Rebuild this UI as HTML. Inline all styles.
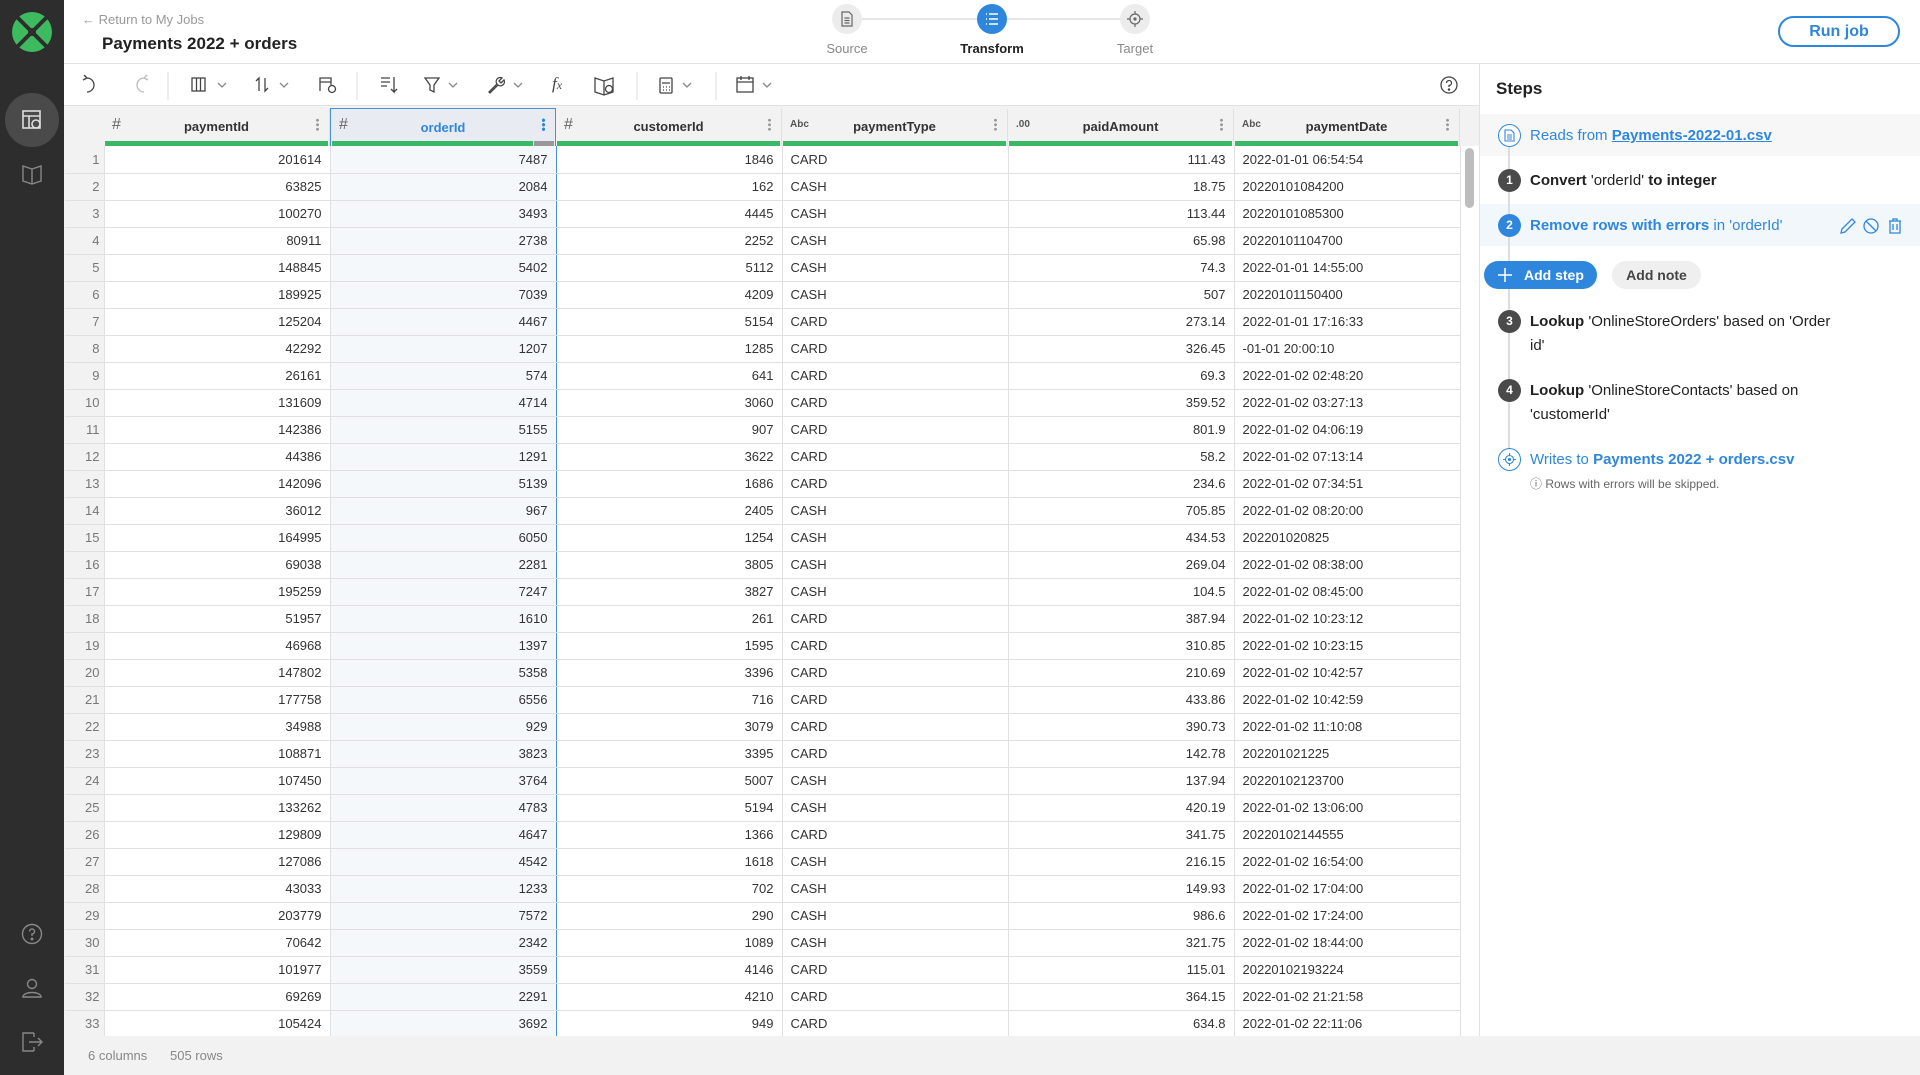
<!DOCTYPE html>
<html><head><meta charset="utf-8"><style>
*{box-sizing:border-box;margin:0;padding:0}
body{width:1920px;height:1075px;overflow:hidden;font-family:"Liberation Sans",sans-serif;background:#fff;position:relative;color:#333}
.abs{position:absolute}
#side{left:0;top:0;width:64px;height:1075px;background:#2d2d2d}
#hdr{left:64px;top:0;width:1856px;height:64px;border-bottom:1px solid #e2e2e2;background:#fff}
#tb{left:64px;top:64px;width:1415px;height:42px;border-bottom:1px solid #e2e2e2;background:#fff}
#grid{left:64px;top:106px;width:1415px;height:930px;background:#f2f2f2}
#foot{left:64px;top:1036px;width:1856px;height:39px;background:#f2f2f2;font-size:13px;color:#888}
#panel{left:1479px;top:64px;width:441px;height:972px;background:#fff;border-left:1px solid #e2e2e2}
table{border-collapse:collapse;table-layout:fixed;position:absolute;left:1px;top:40px;font-size:13px;color:#333}
td{height:27px;border-bottom:1px solid #e0e0e0;border-right:1px solid #e0e0e0;background:#fff;white-space:nowrap;overflow:hidden;padding:0 8px;text-align:right}
td:nth-child(1){background:#f2f2f2;color:#777;padding:0 4px 0 0;width:39px}
td:nth-child(3){background:#f4f8fb;border-left:1px solid #4a90d9;border-right:1px solid #4a90d9}
td:nth-child(5),td:nth-child(7){text-align:left}
.th{position:absolute;top:3px;height:37px;background:#f2f2f2;border-right:1px solid #e0e0e0;font-size:13px;font-weight:bold;color:#333}
.th .n{position:absolute;left:0;right:0;top:10px;text-align:center}
.th .t{position:absolute;left:8px;top:7px;font-weight:normal;color:#666;font-size:16px}
.th .ts{position:absolute;left:8px;top:10px;font-size:10px;color:#555}
.th .g{position:absolute;left:1px;right:1px;bottom:0;height:5px;background:#3bb866}
.th .d{position:absolute;right:10px;top:9px;width:3px;height:13px;background:radial-gradient(circle,#999 1.3px,transparent 1.6px) 0 0/3px 4.5px}
.ic{position:absolute}
.sb{position:absolute;font-size:15px}
</style></head><body>
<div id="side" class="abs">
<svg class="ic" style="left:11px;top:11px" width="42" height="42" viewBox="0 0 42 42"><circle cx="21" cy="21" r="20" fill="#3dbb5e"/><path d="M3 3L39 39M39 3L3 39" stroke="#2d2d2d" stroke-width="4"/><circle cx="21" cy="21" r="4" fill="#2d2d2d"/></svg>
<div class="abs" style="left:5px;top:93px;width:54px;height:54px;border-radius:27px;background:#4a4a4a"></div>
<svg class="ic" style="left:21px;top:109px" width="22" height="22" viewBox="0 0 22 22" fill="none" stroke="#ddd" stroke-width="1.6"><rect x="2" y="2" width="17" height="17"/><path d="M2 7H19M8 7V19"/><circle cx="15" cy="15" r="4"/></svg>
<svg class="ic" style="left:21px;top:163px" width="22" height="22" viewBox="0 0 22 22" fill="none" stroke="#888" stroke-width="1.4"><path d="M2 3L11 6L20 3V18L11 21L2 18ZM11 6V21"/></svg>
<svg class="ic" style="left:21px;top:923px" width="22" height="22" viewBox="0 0 22 22" fill="none" stroke="#888" stroke-width="1.4"><circle cx="11" cy="11" r="9.5"/><path d="M8.5 8.5A2.5 2.5 0 1 1 11 11V13"/><circle cx="11" cy="16" r=".8" fill="#888"/></svg>
<svg class="ic" style="left:21px;top:977px" width="22" height="22" viewBox="0 0 22 22" fill="none" stroke="#888" stroke-width="1.4"><circle cx="11" cy="7" r="4.5"/><path d="M2 20C2 14 20 14 20 20Z"/></svg>
<svg class="ic" style="left:21px;top:1031px" width="22" height="22" viewBox="0 0 22 22" fill="none" stroke="#888" stroke-width="1.4"><path d="M13 2H2V20H13M13 2V6M13 20V16M8 11H21M17 7L21 11L17 15"/></svg>
</div>

<div id="hdr" class="abs">
<div class="abs" style="left:18px;top:12px;font-size:13px;color:#999">&#8592; Return to My Jobs</div>
<div class="abs" style="left:38px;top:34px;font-size:17px;font-weight:bold;color:#222">Payments 2022 + orders</div>
<div class="abs" style="left:798px;top:18px;width:272px;height:2px;background:#e6e6e6"></div>
<div class="abs" style="left:768px;top:4px;width:30px;height:30px;border-radius:15px;background:#ececec"></div>
<svg class="ic" style="left:775px;top:11px" width="16" height="16" viewBox="0 0 16 16" fill="none" stroke="#666" stroke-width="1.2"><path d="M3 1H10L13 4V15H3ZM5.5 7H10.5M5.5 9.5H10.5M5.5 12H10.5"/></svg>
<div class="abs" style="left:753px;top:41px;width:60px;text-align:center;font-size:13px;color:#888">Source</div>
<div class="abs" style="left:913px;top:4px;width:30px;height:30px;border-radius:15px;background:#2f87dd"></div>
<svg class="ic" style="left:920px;top:11px" width="16" height="16" viewBox="0 0 16 16" fill="none" stroke="#fff" stroke-width="1.4"><path d="M5 3H14M5 8H14M5 13H14M2 3H3M2 8H3M2 13H3"/></svg>
<div class="abs" style="left:888px;top:41px;width:80px;text-align:center;font-size:13px;font-weight:bold;color:#222">Transform</div>
<div class="abs" style="left:1056px;top:4px;width:30px;height:30px;border-radius:15px;background:#ececec"></div>
<svg class="ic" style="left:1063px;top:11px" width="16" height="16" viewBox="0 0 16 16" fill="none" stroke="#666" stroke-width="1.2"><circle cx="8" cy="8" r="5"/><circle cx="8" cy="8" r="1" fill="#666"/><path d="M8 0V3M8 13V16M0 8H3M13 8H16"/></svg>
<div class="abs" style="left:1041px;top:41px;width:60px;text-align:center;font-size:13px;color:#888">Target</div>
<div class="abs" style="left:1714px;top:16px;width:122px;height:31px;border:2px solid #2f87dd;border-radius:16px;color:#2f87dd;font-weight:bold;font-size:16px;text-align:center;line-height:27px">Run job</div>
</div>

<div id="tb" class="abs">
<svg class="ic" style="left:0;top:0" width="1415" height="42" fill="none" stroke="#444" stroke-width="1.3">
<path d="M29 14A7 7 0 1 1 29 28M29 14L26 11M29 14L25 16" transform="translate(-6,0)"/>
<path stroke="#bbb" d="M74 14A7 7 0 1 0 74 28M74 14L77 11M74 14L78 16" transform="translate(6,0)"/>
<path stroke="#e4e4e4" d="M104 8V36M293 8V36M573 8V36M652 8V36"/>
<rect x="128" y="14" width="13" height="13"/><path d="M132.5 14V27M136.5 14V27"/><path stroke="#888" d="M154 19L158 23L162 19"/>
<path d="M195 27V14L192 17M201 14V27L204 24"/><path stroke="#888" d="M216 19L220 23L224 19"/>
<path d="M256 27V14H267V21M256 18H267"/><circle cx="268" cy="25" r="3.5"/>
<path d="M317 14H326M317 18H326M317 22H323M330 13V28L327 25M330 28L333 25"/>
<path d="M361 14H375L370 21V28L366 26V21Z"/><path stroke="#888" d="M385 19L389 23L393 19"/>
<path d="M425 28L433 20A4 4 0 0 1 438 14L435 17L437 19L440 16A4 4 0 0 1 434 21L426 29Z"/><path stroke="#888" d="M450 19L454 23L458 19"/>
<path d="M531 14L540 17L549 14V28L540 31L531 28ZM540 17V31"/><circle cx="545" cy="25" r="3.5"/>
<rect x="596" y="14" width="12" height="15" rx="1"/><path d="M598 19H606M599 23H600M602 23H603M605 23H606M599 26H600M602 26H603M605 26H606"/><path stroke="#888" d="M619 19L623 23L627 19"/>
<rect x="673" y="14" width="16" height="14"/><path d="M673 18H689M677 12V16M685 12V16"/><path stroke="#888" d="M699 19L703 23L707 19"/>
<circle cx="1385" cy="21" r="8"/><path d="M1382.5 19A2.5 2.5 0 1 1 1385 21.5V23"/><circle cx="1385" cy="25.5" r=".6" fill="#444"/>
</svg>
<div class="abs" style="left:488px;top:10px;font-family:'Liberation Serif',serif;font-style:italic;font-size:17px;color:#444">f<span style="font-size:12px">x</span></div>
</div>

<div id="grid" class="abs">
<div class="th" style="left:40px;width:226px"><span class="t">#</span><span class="n">paymentId</span><span class="d"></span><span class="g"></span></div>
<div class="th" style="left:266px;width:226px;background:#e8ecf2;border:1px solid #4a90d9;border-bottom:none;top:2px;height:38px"><span class="t">#</span><span class="n" style="color:#2f87dd;top:11px">orderId</span><span class="d" style="background:radial-gradient(circle,#2f87dd 1.5px,transparent 1.8px) 0 0/3px 4.5px"></span><span class="g" style="right:22px"></span><span class="abs" style="right:1px;bottom:0;width:20px;height:5px;background:#999"></span></div>
<div class="th" style="left:492px;width:226px"><span class="t">#</span><span class="n">customerId</span><span class="d"></span><span class="g"></span></div>
<div class="th" style="left:718px;width:226px"><span class="ts">Abc</span><span class="n">paymentType</span><span class="d"></span><span class="g"></span></div>
<div class="th" style="left:944px;width:226px"><span class="ts">.00</span><span class="n">paidAmount</span><span class="d"></span><span class="g"></span></div>
<div class="th" style="left:1170px;width:226px"><span class="ts">Abc</span><span class="n">paymentDate</span><span class="d"></span><span class="g"></span></div>
<table>
<colgroup><col style="width:39px"><col style="width:226px"><col style="width:226px"><col style="width:226px"><col style="width:226px"><col style="width:226px"><col style="width:226px"></colgroup>
<tr><td>1</td><td>201614</td><td>7487</td><td>1846</td><td>CARD</td><td>111.43</td><td>2022-01-01 06:54:54</td></tr>
<tr><td>2</td><td>63825</td><td>2084</td><td>162</td><td>CASH</td><td>18.75</td><td>20220101084200</td></tr>
<tr><td>3</td><td>100270</td><td>3493</td><td>4445</td><td>CASH</td><td>113.44</td><td>20220101085300</td></tr>
<tr><td>4</td><td>80911</td><td>2738</td><td>2252</td><td>CASH</td><td>65.98</td><td>20220101104700</td></tr>
<tr><td>5</td><td>148845</td><td>5402</td><td>5112</td><td>CASH</td><td>74.3</td><td>2022-01-01 14:55:00</td></tr>
<tr><td>6</td><td>189925</td><td>7039</td><td>4209</td><td>CASH</td><td>507</td><td>20220101150400</td></tr>
<tr><td>7</td><td>125204</td><td>4467</td><td>5154</td><td>CARD</td><td>273.14</td><td>2022-01-01 17:16:33</td></tr>
<tr><td>8</td><td>42292</td><td>1207</td><td>1285</td><td>CARD</td><td>326.45</td><td>-01-01 20:00:10</td></tr>
<tr><td>9</td><td>26161</td><td>574</td><td>641</td><td>CARD</td><td>69.3</td><td>2022-01-02 02:48:20</td></tr>
<tr><td>10</td><td>131609</td><td>4714</td><td>3060</td><td>CARD</td><td>359.52</td><td>2022-01-02 03:27:13</td></tr>
<tr><td>11</td><td>142386</td><td>5155</td><td>907</td><td>CARD</td><td>801.9</td><td>2022-01-02 04:06:19</td></tr>
<tr><td>12</td><td>44386</td><td>1291</td><td>3622</td><td>CARD</td><td>58.2</td><td>2022-01-02 07:13:14</td></tr>
<tr><td>13</td><td>142096</td><td>5139</td><td>1686</td><td>CARD</td><td>234.6</td><td>2022-01-02 07:34:51</td></tr>
<tr><td>14</td><td>36012</td><td>967</td><td>2405</td><td>CASH</td><td>705.85</td><td>2022-01-02 08:20:00</td></tr>
<tr><td>15</td><td>164995</td><td>6050</td><td>1254</td><td>CASH</td><td>434.53</td><td>202201020825</td></tr>
<tr><td>16</td><td>69038</td><td>2281</td><td>3805</td><td>CASH</td><td>269.04</td><td>2022-01-02 08:38:00</td></tr>
<tr><td>17</td><td>195259</td><td>7247</td><td>3827</td><td>CASH</td><td>104.5</td><td>2022-01-02 08:45:00</td></tr>
<tr><td>18</td><td>51957</td><td>1610</td><td>261</td><td>CARD</td><td>387.94</td><td>2022-01-02 10:23:12</td></tr>
<tr><td>19</td><td>46968</td><td>1397</td><td>1595</td><td>CARD</td><td>310.85</td><td>2022-01-02 10:23:15</td></tr>
<tr><td>20</td><td>147802</td><td>5358</td><td>3396</td><td>CARD</td><td>210.69</td><td>2022-01-02 10:42:57</td></tr>
<tr><td>21</td><td>177758</td><td>6556</td><td>716</td><td>CARD</td><td>433.86</td><td>2022-01-02 10:42:59</td></tr>
<tr><td>22</td><td>34988</td><td>929</td><td>3079</td><td>CARD</td><td>390.73</td><td>2022-01-02 11:10:08</td></tr>
<tr><td>23</td><td>108871</td><td>3823</td><td>3395</td><td>CARD</td><td>142.78</td><td>202201021225</td></tr>
<tr><td>24</td><td>107450</td><td>3764</td><td>5007</td><td>CASH</td><td>137.94</td><td>20220102123700</td></tr>
<tr><td>25</td><td>133262</td><td>4783</td><td>5194</td><td>CASH</td><td>420.19</td><td>2022-01-02 13:06:00</td></tr>
<tr><td>26</td><td>129809</td><td>4647</td><td>1366</td><td>CARD</td><td>341.75</td><td>20220102144555</td></tr>
<tr><td>27</td><td>127086</td><td>4542</td><td>1618</td><td>CASH</td><td>216.15</td><td>2022-01-02 16:54:00</td></tr>
<tr><td>28</td><td>43033</td><td>1233</td><td>702</td><td>CASH</td><td>149.93</td><td>2022-01-02 17:04:00</td></tr>
<tr><td>29</td><td>203779</td><td>7572</td><td>290</td><td>CASH</td><td>986.6</td><td>2022-01-02 17:24:00</td></tr>
<tr><td>30</td><td>70642</td><td>2342</td><td>1089</td><td>CASH</td><td>321.75</td><td>2022-01-02 18:44:00</td></tr>
<tr><td>31</td><td>101977</td><td>3559</td><td>4146</td><td>CARD</td><td>115.01</td><td>20220102193224</td></tr>
<tr><td>32</td><td>69269</td><td>2291</td><td>4210</td><td>CARD</td><td>364.15</td><td>2022-01-02 21:21:58</td></tr>
<tr><td>33</td><td>105424</td><td>3692</td><td>949</td><td>CARD</td><td>634.8</td><td>2022-01-02 22:11:06</td></tr>
</table>
<div class="abs" style="left:1396px;top:40px;width:19px;height:890px;background:#fff;border-left:1px solid #e0e0e0"></div>
<div class="abs" style="left:1401px;top:42px;width:9px;height:60px;border-radius:5px;background:#bdbdbd"></div>
</div>

<div id="foot" class="abs"><span class="abs" style="left:24px;top:12px">6 columns</span><span class="abs" style="left:106px;top:12px">505 rows</span></div>

<div id="panel" class="abs">
<div class="abs" style="left:16px;top:15px;font-size:17px;font-weight:bold;color:#222">Steps</div>
<div class="abs" style="left:0;top:50px;width:441px;height:42px;background:#f7f7f7"></div>
<div class="abs" style="left:0;top:140px;width:441px;height:42px;background:#f2f7fc"></div>
<div class="abs" style="left:28px;top:71px;width:2px;height:324px;background:#ddd"></div>
<div class="abs" style="left:18px;top:60px;width:23px;height:23px;border-radius:12px;border:1.5px solid #2f87dd;background:#fff"></div>
<svg class="ic" style="left:23px;top:65px" width="13" height="13" viewBox="0 0 13 13" fill="none" stroke="#2f87dd" stroke-width="1.1"><path d="M2 1H8L11 4V12H2ZM4 6H9M4 8H9M4 10H9"/></svg>
<div class="sb" style="left:50px;top:63px;color:#2f87dd">Reads from <b style="text-decoration:underline">Payments-2022-01.csv</b></div>
<div class="abs" style="left:18px;top:105px;width:23px;height:23px;border-radius:12px;background:#4a4a4a;color:#fff;font-size:12px;font-weight:bold;text-align:center;line-height:23px">1</div>
<div class="sb" style="left:50px;top:108px;color:#222"><b>Convert</b> 'orderId' <b>to integer</b></div>
<div class="abs" style="left:18px;top:150px;width:23px;height:23px;border-radius:12px;background:#2f87dd;color:#fff;font-size:12px;font-weight:bold;text-align:center;line-height:23px">2</div>
<div class="sb" style="left:50px;top:153px;color:#2f87dd"><b>Remove rows with errors</b> in 'orderId'</div>
<svg class="ic" style="left:358px;top:152px" width="80" height="20" fill="none" stroke="#2f87dd" stroke-width="1.3"><path d="M3 17L4 13L14 3L17 6L7 16Z"/><circle cx="33" cy="10" r="7"/><path d="M28 5L38 15"/><path d="M51 5H63M55 5V3H59V5M52 5V17H62V5M55 8V14M59 8V14"/></svg>
<div class="abs" style="left:4px;top:197px;width:113px;height:28px;border-radius:14px;background:#2f87dd;color:#fff;font-weight:bold;font-size:14px;line-height:28px;padding-left:40px">Add step</div>
<svg class="ic" style="left:18px;top:204px" width="14" height="14" stroke="#fff" stroke-width="1.5"><path d="M7 0V14M0 7H14"/></svg>
<div class="abs" style="left:132px;top:197px;width:89px;height:28px;border-radius:14px;background:#efefef;color:#444;font-weight:bold;font-size:14px;line-height:28px;text-align:center">Add note</div>
<div class="abs" style="left:18px;top:246px;width:23px;height:23px;border-radius:12px;background:#4a4a4a;color:#fff;font-size:12px;font-weight:bold;text-align:center;line-height:23px">3</div>
<div class="sb" style="left:50px;top:246px;color:#222;line-height:24px;white-space:nowrap"><b>Lookup</b> 'OnlineStoreOrders' based on 'Order<br>id'</div>
<div class="abs" style="left:18px;top:315px;width:23px;height:23px;border-radius:12px;background:#4a4a4a;color:#fff;font-size:12px;font-weight:bold;text-align:center;line-height:23px">4</div>
<div class="sb" style="left:50px;top:315px;color:#222;line-height:24px;white-space:nowrap"><b>Lookup</b> 'OnlineStoreContacts' based on<br>'customerId'</div>
<div class="abs" style="left:18px;top:384px;width:23px;height:23px;border-radius:12px;border:1.5px solid #2f87dd;background:#fff"></div>
<svg class="ic" style="left:22px;top:388px" width="15" height="15" fill="none" stroke="#2f87dd" stroke-width="1.1"><circle cx="7.5" cy="7.5" r="4"/><circle cx="7.5" cy="7.5" r="1" fill="#2f87dd"/><path d="M7.5 1V3.5M7.5 11.5V14M1 7.5H3.5M11.5 7.5H14"/></svg>
<div class="sb" style="left:50px;top:387px;color:#2f87dd">Writes to <b>Payments 2022 + orders.csv</b></div>
<div class="abs" style="left:50px;top:411px;font-size:12px;color:#666">&#9432; Rows with errors will be skipped.</div>
</div>
</body></html>
